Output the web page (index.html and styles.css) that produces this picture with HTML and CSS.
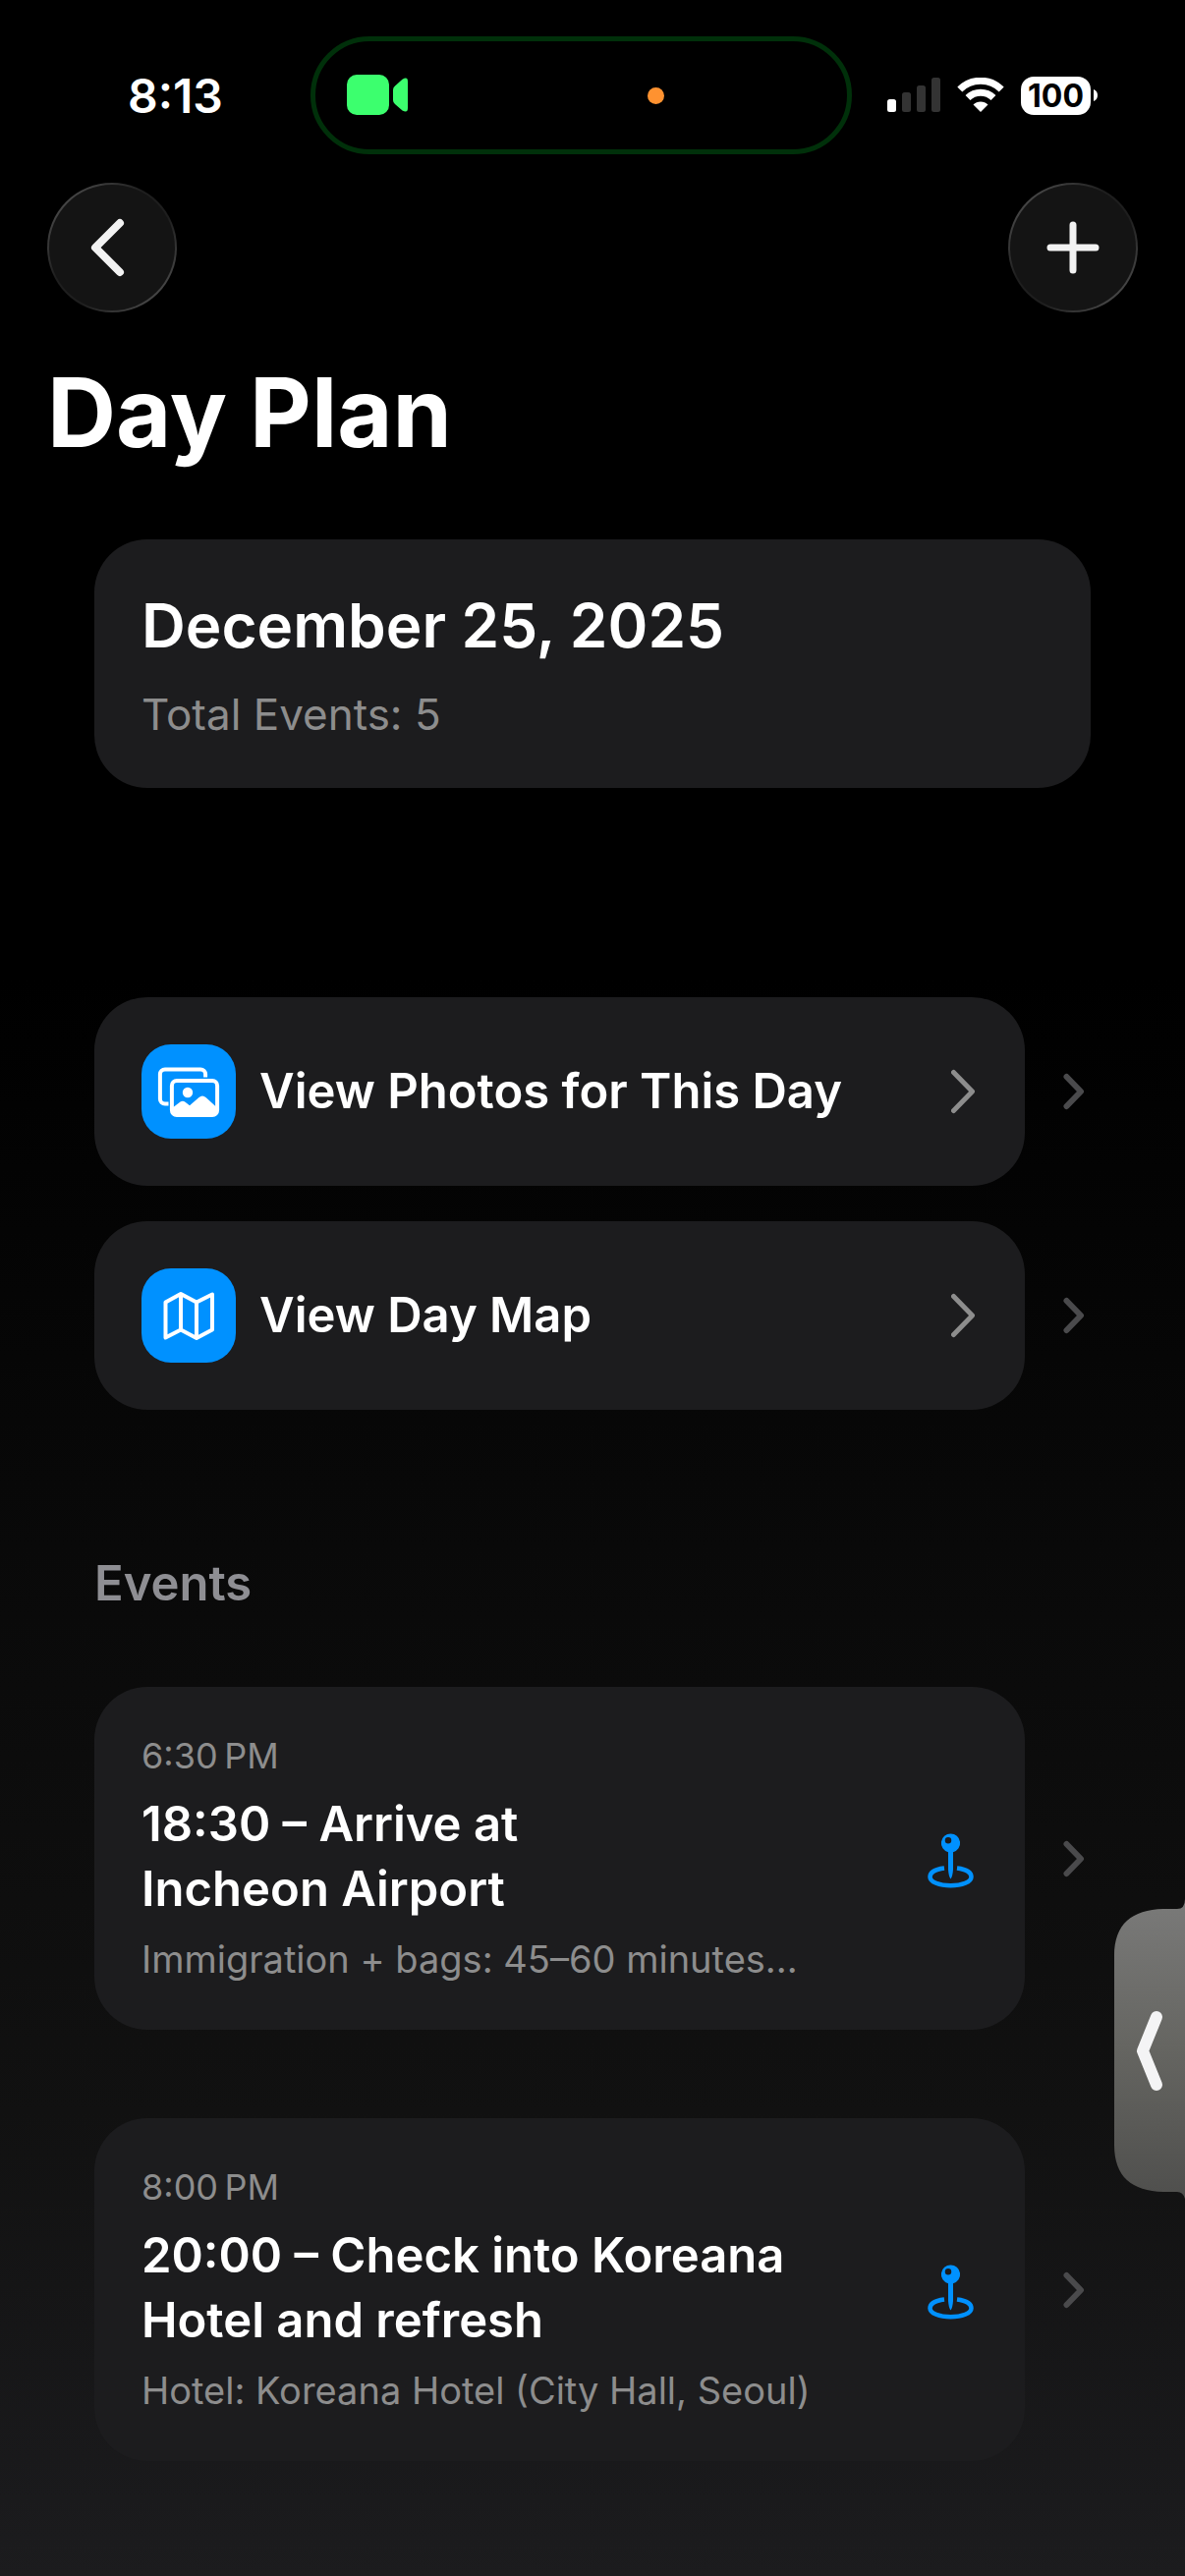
FILE: index.html
```html
<!DOCTYPE html>
<html lang="en">
<head>
  <meta charset="utf-8">
  <meta name="viewport" content="width=device-width, initial-scale=1">
  <title>Day Plan</title>
  <link rel="stylesheet" href="styles.css">
</head>
<body>
  <div class="status-bar">
    <span class="time">8:13</span>
    <div class="island">
      <svg class="camera" width="62" height="42" viewBox="0 0 62 42">
        <rect x="0" y="0" width="43" height="41" rx="10"/>
        <path d="M47 15.500 Q47 13 49 11.500 L56.500 4.800 Q62 1.500 62 7 V34 Q62 39.500 56.500 36.500 L49 30 Q47 28.500 47 26 Z"/>
      </svg>
      <span class="mic-dot"></span>
    </div>
    <div class="status-icons">
      <svg width="54" height="36" viewBox="0 0 54 36" fill="#333">
        <rect x="0" y="22" width="9" height="13" rx="2.500" fill="#fff"/>
        <rect x="15" y="15" width="9" height="20" rx="2.500"/>
        <rect x="30" y="8" width="9" height="27" rx="2.500"/>
        <rect x="45" y="0" width="9" height="35" rx="2.500"/>
      </svg>
      <svg width="48" height="36" viewBox="0 0 48 36">
        <g fill="none" stroke="#fff" stroke-width="7">
          <path d="M2.800 12 A30 30 0 0 1 45.200 12"/>
          <path d="M11 20.500 A18.500 18.500 0 0 1 37 20.500"/>
        </g>
        <path d="M16.500 27.500 A10.600 10.600 0 0 1 31.500 27.500 L24 35 Z" fill="#fff"/>
      </svg>
      <div class="battery">
        <span class="battery-level">100</span>
        <svg width="4" height="12" viewBox="0 0 4 12"><path d="M0 0 Q4 1.500 4 6 Q4 10.500 0 12 Z" fill="#fff"/></svg>
      </div>
    </div>
  </div>

  <header class="nav">
    <button class="round-btn" type="button" aria-label="Back">
      <svg width="60" height="60" viewBox="0 0 60 60"><path d="M38 5 L13 30 L38 55"/></svg>
    </button>
    <button class="round-btn plus" type="button" aria-label="Add event">
      <svg width="60" height="60" viewBox="0 0 60 60"><path d="M30 7 V53 M7 30 H53"/></svg>
    </button>
  </header>

  <h1 class="title">Day Plan</h1>

  <main class="list">
    <section class="card summary">
      <h2 class="date">December 25, 2025</h2>
      <p class="total">Total Events: 5</p>
    </section>

    <nav class="links">
      <a class="row" href="#photos">
        <div class="card link-card">
          <svg class="tile" viewBox="0 0 96 96">
            <rect x="18.900" y="25.400" width="46.200" height="35.200" rx="5"/>
            <rect x="27.500" y="33.500" width="53" height="42" rx="8" class="cutout"/>
            <rect x="30.900" y="36.900" width="46.200" height="35.200" rx="5"/>
            <circle cx="47" cy="49" r="5.200" class="solid"/>
            <path class="solid" d="M31 65 L39.500 58.600 Q42 56.700 44.500 58.700 L49 62.300 L58.500 54 Q62 51 65.500 54 L77 64.500 V69 Q77 73 73 73 H35 Q31 73 31 69 Z"/>
          </svg>
          <span class="label">View Photos for This Day</span>
          <svg class="chevron" width="27" height="48" viewBox="0 0 27 48"><path d="M2.500 4.500 L21.500 24 L2.500 43.500"/></svg>
        </div>
        <svg class="disclosure" width="28" height="42" viewBox="0 0 28 42"><path d="M3.500 6 L18 21 L3.500 36"/></svg>
      </a>
      <a class="row" href="#map">
        <div class="card link-card">
          <svg class="tile" viewBox="0 0 96 96">
            <path d="M24.500 34.500 L40 26 L56 34.500 L72 26.500 V62.500 L56 71 L40 62.500 L24.500 70.500 Z M40 26 V62.500 M56 34.500 V71"/>
          </svg>
          <span class="label">View Day Map</span>
          <svg class="chevron" width="27" height="48" viewBox="0 0 27 48"><path d="M2.500 4.500 L21.500 24 L2.500 43.500"/></svg>
        </div>
        <svg class="disclosure" width="28" height="42" viewBox="0 0 28 42"><path d="M3.500 6 L18 21 L3.500 36"/></svg>
      </a>
    </nav>

    <h2 class="section-title">Events</h2>

    <div class="events">
      <a class="row" href="#event-1">
        <div class="card event-card">
          <div class="event-text">
            <span class="event-time">6:30&#8239;PM</span>
            <h3 class="label">18:30 – Arrive at<br>Incheon Airport</h3>
            <p class="note">Immigration + bags: 45–60 minutes...</p>
          </div>
          <svg class="pin" width="52" height="60" viewBox="0 0 52 60">
            <path class="ring" d="M18 39.500 C8 40.700 3.500 44.500 3.500 48.500 C3.500 53.500 13 57.300 24.500 57.300 C36 57.300 45.500 53.500 45.500 48.500 C45.500 44.500 41 40.700 31 39.500"/>
            <path fill-rule="evenodd" d="M24.500 4.500 A9.500 9.500 0 0 1 27 23.200 V41 Q26.500 48 24.500 50.500 Q22.500 48 22 41 V23.200 A9.500 9.500 0 0 1 24.500 4.500 Z M22 8 A3.200 3.200 0 0 0 22 14.500 A3.200 3.200 0 0 0 22 8 Z"/>
          </svg>
        </div>
        <svg class="disclosure" width="28" height="42" viewBox="0 0 28 42"><path d="M3.500 6 L18 21 L3.500 36"/></svg>
      </a>
      <a class="row" href="#event-2">
        <div class="card event-card">
          <div class="event-text">
            <span class="event-time">8:00&#8239;PM</span>
            <h3 class="label">20:00 – Check into Koreana<br>Hotel and refresh</h3>
            <p class="note">Hotel: Koreana Hotel (City Hall, Seoul)</p>
          </div>
          <svg class="pin" width="52" height="60" viewBox="0 0 52 60">
            <path class="ring" d="M18 39.500 C8 40.700 3.500 44.500 3.500 48.500 C3.500 53.500 13 57.300 24.500 57.300 C36 57.300 45.500 53.500 45.500 48.500 C45.500 44.500 41 40.700 31 39.500"/>
            <path fill-rule="evenodd" d="M24.500 4.500 A9.500 9.500 0 0 1 27 23.200 V41 Q26.500 48 24.500 50.500 Q22.500 48 22 41 V23.200 A9.500 9.500 0 0 1 24.500 4.500 Z M22 8 A3.200 3.200 0 0 0 22 14.500 A3.200 3.200 0 0 0 22 8 Z"/>
          </svg>
        </div>
        <svg class="disclosure" width="28" height="42" viewBox="0 0 28 42"><path d="M3.500 6 L18 21 L3.500 36"/></svg>
      </a>
    </div>
  </main>

  <!-- floating tab of the minimised video window -->
  <button class="side-tab" type="button" aria-label="Show video">
    <svg width="72" height="308" viewBox="0 0 72 308">
      <defs>
        <linearGradient id="tab" x1="0" y1="0" x2="0" y2="1">
          <stop offset="0" stop-color="#7a7a79"/>
          <stop offset="0.500" stop-color="#656561"/>
          <stop offset="1" stop-color="#4f4f4d"/>
        </linearGradient>
      </defs>
      <path fill="url(#tab)" d="M72 0 Q72 10 64 10 H50 C18 11 0 25 0 58 V250 C0 283 18 297 50 298 H64 Q70 298 72 305 Z"/>
      <path fill="none" stroke="#f4f4f5" stroke-width="12" stroke-linecap="round" stroke-linejoin="round" d="M43 120 L29 154.500 L43 189"/>
    </svg>
  </button>
</body>
</html>
```

FILE: styles.css
```css
* {
  box-sizing: border-box;
}
body {
  margin: 0;
  min-height: 100vh;
  background: #000 linear-gradient(to bottom, #000 0, #000 38%, #090909 60%, #111 82%, #1a1a1c 97%, #1c1c1e 100%);
  color: #fff;
  font-family: Inter, "Liberation Sans", sans-serif;
}
h1, h2, h3, p {
  margin: 0;
}
svg {
  display: block;
  flex-shrink: 0;
}
a {
  color: inherit;
  text-decoration: none;
}
button {
  border: 0;
  padding: 0;
  background: none;
  color: inherit;
  cursor: pointer;
}

/* status bar */
.status-bar {
  display: flex;
  align-items: center;
  padding: 37px 89px 0 130px;
}
.time {
  font-size: 48px;
  font-weight: 600;
}
.island {
  display: flex;
  align-items: center;
  justify-content: space-between;
  width: 551px;
  height: 120px;
  margin-left: auto;
  margin-right: 36px;
  padding: 0 186px 0 32px;
  border: 5px solid #00300a;
  border-radius: 60px;
}
.camera {
  fill: #3cff6e;
}
.mic-dot {
  width: 17px;
  height: 17px;
  border-radius: 50%;
  background: #ff9230;
}
.status-icons {
  display: flex;
  align-items: center;
  gap: 17px;
}
.battery {
  display: flex;
  align-items: center;
  gap: 3px;
}
.battery-level {
  width: 71px;
  border-radius: 13px;
  background: #fff;
  color: #000;
  font-size: 32px;
  font-weight: 700;
  line-height: 39px;
  text-align: center;
}

/* header */
.nav {
  display: flex;
  justify-content: space-between;
  padding: 29px 48px 0;
}
.round-btn {
  display: flex;
  align-items: center;
  justify-content: center;
  width: 132px;
  height: 132px;
  border: 2px solid transparent;
  border-radius: 50%;
  background:
    linear-gradient(#141414, #141414) padding-box,
    linear-gradient(135deg, #444 15%, #1e1e1e 40%, #1e1e1e 60%, #444 85%) border-box;
}
.round-btn path {
  fill: none;
  stroke: #f2f2f2;
  stroke-width: 8;
  stroke-linecap: round;
  stroke-linejoin: round;
}
.plus path {
  stroke-width: 7;
}
.title {
  padding: 42px 48px 0;
  font-size: 97px;
  font-weight: 700;
  line-height: 120px;
}

/* list */
.list {
  padding: 69px 96px 116px;
}
.card {
  padding: 48px;
  border-radius: 54px;
  background: #1c1c1e;
}
.date {
  font-size: 62px;
  font-weight: 600;
  line-height: 80px;
}
.total {
  margin-top: 23px;
  color: #8d8d8d;
  font-size: 44px;
  line-height: 54px;
}
.links {
  display: flex;
  flex-direction: column;
  gap: 36px;
  margin-top: 213px;
}
.row {
  display: flex;
  align-items: center;
  gap: 39px;
}
.row .card {
  display: flex;
  align-items: center;
  gap: 24px;
  flex: 1;
}
.tile {
  width: 96px;
  height: 96px;
  border-radius: 30px;
  background: #0091ff;
  fill: none;
  stroke: #fff;
  stroke-width: 4;
  stroke-linejoin: round;
}
.tile .cutout {
  fill: #0091ff;
  stroke: none;
}
.tile .solid {
  fill: #fff;
  stroke: none;
}
.label {
  font-size: 49px;
  font-weight: 600;
  line-height: 66px;
}
.chevron, .disclosure {
  fill: none;
  stroke: #8d8d8d;
  stroke-width: 5;
  stroke-linecap: round;
  stroke-linejoin: round;
}
.chevron {
  margin-left: auto;
}
.disclosure {
  stroke: #4a4a4c;
  stroke-width: 6;
}
.section-title {
  margin: 144px 0 72px;
  color: #8e8e93;
  font-size: 49px;
  font-weight: 600;
  line-height: 66px;
}
.events {
  display: flex;
  flex-direction: column;
  gap: 90px;
}
.event-text {
  display: flex;
  flex-direction: column;
  gap: 15px;
  flex: 1;
}
.event-time {
  color: #8d8d8d;
  font-size: 36px;
  line-height: 44px;
}
.note {
  color: #8d8d8d;
  font-size: 38px;
  line-height: 47px;
}
.pin {
  fill: #0091ff;
}
.pin .ring {
  fill: none;
  stroke: #0091ff;
  stroke-width: 4.500;
}

.side-tab {
  position: absolute;
  top: 1933px;
  right: 0;
}
```
